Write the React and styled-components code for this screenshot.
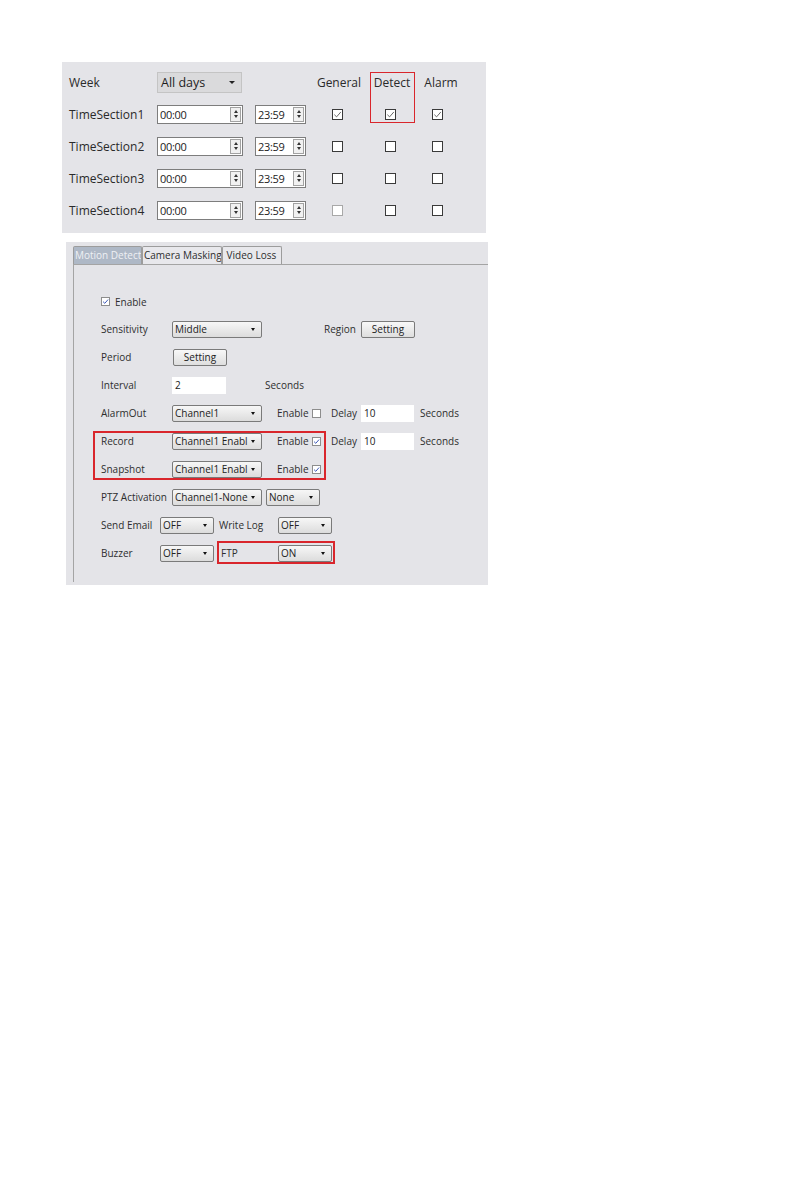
import React from "react";
import styled, { createGlobalStyle } from "styled-components";

const Global = createGlobalStyle`
  html, body { margin: 0; padding: 0; background: #ffffff; }
  body { font-family: "Open Sans", "Noto Sans", Arial, sans-serif; color: #2b2b2b; }
`;

const Page = styled.div`
  width: 805px;
  height: 1191px;
  padding: 62px 0 0 62px;
  box-sizing: border-box;
  display: flex;
  flex-direction: column;
  align-items: flex-start;
`;

/* ---------- Schedule panel ---------- */
const SchedulePanel = styled.div`
  position: relative;
  width: 424px;
  height: 171px;
  box-sizing: border-box;
  padding: 4px 0 0 7px;
  background: #e4e4e8;
`;

const ScheduleGrid = styled.div`
  display: grid;
  grid-template-columns: 88px 98px 56px 52px 54px 40px;
  grid-auto-rows: 32px;
  align-items: center;
`;

const BigLabel = styled.span`
  font-size: 12px;
  color: #2a2a2a;
  justify-self: ${(p) => (p.$center ? "center" : "start")};
  padding-left: ${(p) => p.$pl || 0}px;
  white-space: nowrap;
`;

const WeekSelect = styled.div`
  width: 85px;
  height: 21px;
  box-sizing: border-box;
  border: 1px solid #c4c4c4;
  background: #dadadc;
  display: flex;
  align-items: center;
  justify-content: space-between;
  padding: 0 6px 0 3px;
  font-size: 12.5px;
  color: #1e1e1e;
`;

const WeekArrow = styled.span`
  width: 0;
  height: 0;
  border-left: 3.5px solid transparent;
  border-right: 3.5px solid transparent;
  border-top: 3.5px solid #222;
`;

const TimeBox = styled.div`
  width: ${(p) => p.$w}px;
  height: 19px;
  box-sizing: border-box;
  border: 1px solid #7d7d7d;
  background: #ffffff;
  display: flex;
  align-items: center;
  justify-content: space-between;
  padding: 0 1px 0 2px;
  font-size: 11px;
  color: #222;
  letter-spacing: -0.3px;
`;

const Spinner = styled.div`
  width: 11px;
  height: 15px;
  box-sizing: border-box;
  border: 1px solid #a2a2a2;
  background: #f1f1f1;
  display: flex;
  flex-direction: column;
  align-items: center;
  justify-content: space-around;
  padding: 1px 0;
`;

const SpinArrow = styled.span`
  width: 0;
  height: 0;
  border-left: 2.5px solid transparent;
  border-right: 2.5px solid transparent;
  ${(p) =>
    p.$up ? "border-bottom: 3px solid #333;" : "border-top: 3px solid #333;"}
`;

const BigCheck = styled.span`
  justify-self: center;
  width: 11px;
  height: 11px;
  box-sizing: border-box;
  border: 1px solid ${(p) => (p.$faint ? "#a8a8a8" : "#3a3a3a")};
  background: #ffffff;
  display: flex;
  align-items: center;
  justify-content: center;
`;

const RedBox = styled.div`
  position: absolute;
  left: ${(p) => p.$x}px;
  top: ${(p) => p.$y}px;
  width: ${(p) => p.$w}px;
  height: ${(p) => p.$h}px;
  box-sizing: border-box;
  border: ${(p) => p.$t || 2}px solid #d9262c;
  pointer-events: none;
`;

/* ---------- Alarm panel ---------- */
const AlarmPanel = styled.div`
  position: relative;
  margin: 9px 0 0 4px;
  width: 422px;
  height: 343px;
  box-sizing: border-box;
  padding: 4px 0 0 7px;
  background: #e4e4e8;
`;

const TabBar = styled.div`
  display: flex;
  height: 18px;
  align-items: stretch;
`;

const Tab = styled.div`
  box-sizing: border-box;
  width: ${(p) => p.$w}px;
  border: 1px solid #9c9c9c;
  border-bottom: none;
  border-radius: 2px 2px 0 0;
  background: ${(p) => (p.$active ? "#aeb8c6" : "#e8e8ec")};
  color: ${(p) => (p.$active ? "#eef0f4" : "#2e2e2e")};
  font-size: 10px;
  line-height: 17px;
  padding-left: 1px;
  white-space: nowrap;
  overflow: hidden;
`;

const Frame = styled.div`
  height: 318px;
  box-sizing: border-box;
  border-left: 1px solid #a4a4a4;
  border-top: 1px solid #a4a4a4;
  padding: 23px 0 0 27px;
`;

const Row = styled.div`
  display: flex;
  align-items: center;
  height: ${(p) => p.$h || 28}px;
`;

const Text = styled.span`
  flex: none;
  box-sizing: border-box;
  width: ${(p) => (p.$w ? `${p.$w}px` : "auto")};
  margin-left: ${(p) => p.$ml || 0}px;
  font-size: 10px;
  color: #2e2e2e;
  white-space: nowrap;
`;

const Select = styled.div`
  flex: none;
  box-sizing: border-box;
  width: ${(p) => p.$w}px;
  height: 17px;
  margin-left: ${(p) => p.$ml || 0}px;
  border: 1px solid #7a7a7a;
  border-radius: 2px;
  background: linear-gradient(#f7f7f7, #dcdcdc);
  display: flex;
  align-items: center;
  justify-content: space-between;
  padding: 0 6px 0 2px;
  font-size: 10px;
  color: #222;
  white-space: nowrap;
  overflow: hidden;
`;

const Arrow = styled.span`
  flex: none;
  width: 0;
  height: 0;
  margin-left: 2px;
  border-left: 2.5px solid transparent;
  border-right: 2.5px solid transparent;
  border-top: 3px solid #111;
`;

const Button = styled.div`
  flex: none;
  box-sizing: border-box;
  width: ${(p) => p.$w}px;
  height: 17px;
  margin-left: ${(p) => p.$ml || 0}px;
  border: 1px solid #7a7a7a;
  border-radius: 2px;
  background: linear-gradient(#f8f8f8, #dedede);
  display: flex;
  align-items: center;
  justify-content: center;
  font-size: 10px;
  color: #222;
`;

const Field = styled.div`
  flex: none;
  box-sizing: border-box;
  width: ${(p) => p.$w}px;
  height: 17px;
  margin-left: ${(p) => p.$ml || 0}px;
  background: #ffffff;
  display: flex;
  align-items: center;
  padding-left: 3px;
  font-size: 10px;
  color: #222;
`;

const SmallCheck = styled.span`
  flex: none;
  width: 9px;
  height: 9px;
  box-sizing: border-box;
  margin-left: ${(p) => p.$ml || 0}px;
  margin-right: ${(p) => p.$mr || 0}px;
  border: 1px solid #8d8d8d;
  background: #ffffff;
  display: flex;
  align-items: center;
  justify-content: center;
`;

const Tick = ({ size = 9, color = "#333", w = 1 }) => (
  <svg width={size} height={size} viewBox="0 0 10 10">
    <path d="M1.5 5.2 L4 7.6 L8.7 2.2" fill="none" stroke={color} strokeWidth={w} />
  </svg>
);

const Spin = () => (
  <Spinner>
    <SpinArrow $up />
    <SpinArrow />
  </Spinner>
);

const BlueTick = () => <Tick size={7} color="#3b57b8" w={1.4} />;

const sections = [
  { name: "TimeSection1", checks: [true, true, true] },
  { name: "TimeSection2", checks: [false, false, false] },
  { name: "TimeSection3", checks: [false, false, false] },
  { name: "TimeSection4", checks: [false, false, false], faint: true },
];

const Sel = ({ w, ml, children }) => (
  <Select $w={w} $ml={ml}>
    <span>{children}</span>
    <Arrow />
  </Select>
);

export default function App() {
  return (
    <>
      <Global />
      <Page>
        <SchedulePanel>
          <ScheduleGrid>
            <BigLabel>Week</BigLabel>
            <WeekSelect>
              <span>All days</span>
              <WeekArrow />
            </WeekSelect>
            <span />
            <BigLabel $center $pl={4}>General</BigLabel>
            <BigLabel $center $pl={4}>Detect</BigLabel>
            <BigLabel $center $pl={8}>Alarm</BigLabel>
            {sections.map((s) => (
              <React.Fragment key={s.name}>
                <BigLabel>{s.name}</BigLabel>
                <TimeBox $w={86}>
                  <span>00:00</span>
                  <Spin />
                </TimeBox>
                <TimeBox $w={51}>
                  <span>23:59</span>
                  <Spin />
                </TimeBox>
                {s.checks.map((c, i) => (
                  <BigCheck key={i} $faint={s.faint && i === 0}>
                    {c && <Tick size={9} color="#444" w={0.9} />}
                  </BigCheck>
                ))}
              </React.Fragment>
            ))}
          </ScheduleGrid>
          <RedBox $x={308} $y={10} $w={45} $h={51} $t={1.5} />
        </SchedulePanel>

        <AlarmPanel>
          <TabBar>
            <Tab $w={69} $active>Motion Detect</Tab>
            <Tab $w={80}>Camera Masking</Tab>
            <Tab $w={60}>&nbsp;Video Loss</Tab>
          </TabBar>
          <Frame>
            <Row $h={27}>
              <SmallCheck $mr={5}>
                <BlueTick />
              </SmallCheck>
              <Text>Enable</Text>
            </Row>
            <Row>
              <Text $w={71}>Sensitivity</Text>
              <Sel w={90}>Middle</Sel>
              <Text $ml={62} $w={37}>Region</Text>
              <Button $w={54}>Setting</Button>
            </Row>
            <Row>
              <Text $w={72}>Period</Text>
              <Button $w={54}>Setting</Button>
            </Row>
            <Row>
              <Text $w={71}>Interval</Text>
              <Field $w={54}>2</Field>
              <Text $ml={39}>Seconds</Text>
            </Row>
            <Row>
              <Text $w={71}>AlarmOut</Text>
              <Sel w={90}>Channel1</Sel>
              <Text $ml={15} $w={35}>Enable</Text>
              <SmallCheck />
              <Text $ml={10} $w={30}>Delay</Text>
              <Field $w={53}>10</Field>
              <Text $ml={6}>Seconds</Text>
            </Row>
            <Row>
              <Text $w={71}>Record</Text>
              <Sel w={90}>Channel1 Enabl</Sel>
              <Text $ml={15} $w={35}>Enable</Text>
              <SmallCheck>
                <BlueTick />
              </SmallCheck>
              <Text $ml={10} $w={30}>Delay</Text>
              <Field $w={53}>10</Field>
              <Text $ml={6}>Seconds</Text>
            </Row>
            <Row>
              <Text $w={71}>Snapshot</Text>
              <Sel w={90}>Channel1 Enabl</Sel>
              <Text $ml={15} $w={35}>Enable</Text>
              <SmallCheck>
                <BlueTick />
              </SmallCheck>
            </Row>
            <Row>
              <Text $w={71}>PTZ Activation</Text>
              <Sel w={90}>Channel1-None</Sel>
              <Sel w={54} ml={4}>None</Sel>
            </Row>
            <Row>
              <Text $w={59}>Send Email</Text>
              <Sel w={54}>OFF</Sel>
              <Text $ml={5} $w={59}>Write Log</Text>
              <Sel w={54}>OFF</Sel>
            </Row>
            <Row>
              <Text $w={59}>Buzzer</Text>
              <Sel w={54}>OFF</Sel>
              <Text $ml={7} $w={57}>FTP</Text>
              <Sel w={54}>ON</Sel>
            </Row>
          </Frame>
          <RedBox $x={27} $y={189} $w={233} $h={49} />
          <RedBox $x={151} $y={299} $w={118} $h={23} />
        </AlarmPanel>
      </Page>
    </>
  );
}
